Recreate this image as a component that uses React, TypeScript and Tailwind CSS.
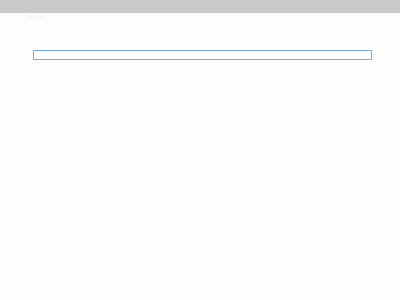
export default function App() {
  return (
    <div className="w-[400px] h-[300px] bg-[#fdfdfd] flex flex-col" style={{ fontFamily: '"Liberation Sans", sans-serif' }}>
      <div className="h-[13px] shrink-0 bg-[#c9c9c9]" />
      <div className="px-[26px] h-[8px] shrink-0 overflow-hidden text-[6px] leading-[8px] text-[#f0f0f0]">Search</div>
      <div className="pl-[33px] pr-[28px] pt-[29px] shrink-0">
        <div className="h-[10px] border border-[#7aacea] bg-white" />
      </div>
    </div>
  );
}
